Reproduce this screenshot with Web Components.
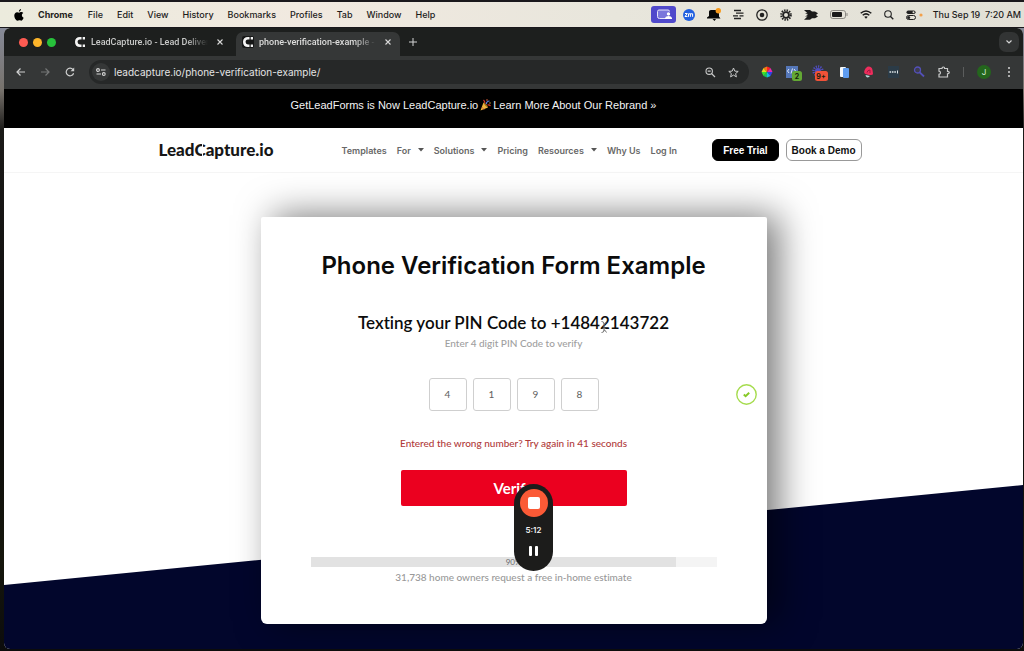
<!DOCTYPE html>
<html lang="en">
<head>
<meta charset="utf-8">
<meta name="viewport" content="width=device-width, initial-scale=1">
<title>phone-verification-example - LeadCapture.io</title>
<style>
  html { height: 100%; }
  body {
    margin: 0;
    min-height: 100%;
    display: flex;
    flex-direction: column;
    font-family: Inter, "Liberation Sans", sans-serif;
    background: linear-gradient(#1a181c 28px, #868a98 28px, #77726c 90px, #1b1a18 130px, #0c0b0b 400px, #15160c 560px, #0c0c0c);
  }
</style>
</head>
<body>
<mac-menubar></mac-menubar>
<browser-window>
  <browser-tabs slot="tabs">
    <browser-tab>LeadCapture.io - Lead Delivery</browser-tab>
    <browser-tab active>phone-verification-example - LeadCapture</browser-tab>
  </browser-tabs>
  <browser-toolbar slot="toolbar" url="leadcapture.io/phone-verification-example/"></browser-toolbar>
  <promo-bar></promo-bar>
  <site-header>
    <nav-item>Templates</nav-item>
    <nav-item menu>For</nav-item>
    <nav-item menu>Solutions</nav-item>
    <nav-item>Pricing</nav-item>
    <nav-item menu>Resources</nav-item>
    <nav-item>Why Us</nav-item>
    <nav-item>Log In</nav-item>
  </site-header>
  <page-stage>
    <verify-card>
      <span slot="title">Phone Verification Form Example</span>
      <span slot="heading">Texting your PIN Code to +14842143722</span>
      <span slot="hint">Enter 4 digit PIN Code to verify</span>
      <pin-code slot="pin" value="4198"></pin-code>
      <span slot="retry">Entered the wrong number? Try again in 41 seconds</span>
      <progress-meter slot="progress" value="90"></progress-meter>
      <span slot="caption">31,738 home owners request a free in-home estimate</span>
    </verify-card>
  </page-stage>
</browser-window>
<recorder-pill></recorder-pill>

<script>
const define = (name, html, setup) => {
  const template = document.createElement('template');
  template.innerHTML = html;
  customElements.define(name, class extends HTMLElement {
    constructor() {
      super();
      this.attachShadow({ mode: 'open' }).append(template.content.cloneNode(true));
    }
    connectedCallback() { if (setup) setup(this, this.shadowRoot); }
  });
};

define('mac-menubar', `
  <style>
    :host { display: flex; align-items: center; height: 25px; margin-top: 2px; margin-bottom: 1px; padding: 0 3px 0 14px;
      background: linear-gradient(90deg, #ecebdd, #f1e9e0 30%, #e8e6dc 60%, #e2e0d6); color: #1d1c1b; font-size: 9px; font-weight: 500; white-space: nowrap; }
    nav { display: flex; align-items: center; gap: 14px; }
    b { font-weight: 700; margin-right: 1px; }
    .status { margin-left: auto; display: flex; align-items: center; gap: 12px; }
    .cast { margin-right: -5px; }
    time { margin-left: -2px; white-space: pre; }
    svg { display: block; }
  </style>
  <nav aria-label="Menu bar">
    <svg width="10" height="12" viewBox="0 0 10 12"><path fill="#000" d="M7 0C7 1.5 6 2.6 4.9 2.6 4.8 1.3 5.8.2 7 0ZM9.3 4.1C8.3 4.7 7.8 5.5 7.9 6.5 8 7.6 8.6 8.3 9.6 8.7 9 10.300 8.200 11.700 7.100 11.700 6.400 11.700 6.100 11.300 5.300 11.300 4.500 11.300 4.100 11.700 3.500 11.700 1.900 11.700.3 8.900.3 6.600.3 4.500 1.600 3.200 3.100 3.200 4 3.200 4.600 3.700 5.200 3.700 5.700 3.700 6.400 3.100 7.400 3.100 8.200 3.200 8.800 3.500 9.300 4.100Z"/></svg>
    <b>Chrome</b><span>File</span><span>Edit</span><span>View</span><span>History</span><span>Bookmarks</span><span>Profiles</span><span>Tab</span><span>Window</span><span>Help</span>
  </nav>
  <div class="status">
    <svg class="cast" width="25" height="17" viewBox="0 0 25 17"><rect width="25" height="17" rx="3" fill="#5049cb"/><path d="M14 12.500H8.500Q6.500 12.500 6.500 10.500V5.500Q6.500 4 8 4H17Q18.500 4 18.500 5.500" fill="#7a76dc" stroke="#e6e5fa"/><circle cx="17.500" cy="8" r="1.700" fill="#fff"/><path d="M14 13V12Q14.500 10 17.500 10T21 12V13Z" fill="#fff"/></svg>
    <svg width="12" height="12" viewBox="0 0 12 12"><circle cx="6" cy="6" r="6" fill="#2160e0"/><path d="M2 4.500H4.300L2 7.500H4.500M5.500 7.800V4.800H7.400V7.800M7.400 4.800H9.600V7.800" fill="none" stroke="#fff"/></svg>
    <svg width="14" height="13" viewBox="0 0 14 13"><path d="M0 10.500V9.500L2 8V3.500Q2 2 4 2H10Q12 2 12 4V8.500L13.500 10.500ZM5.500 11H9L7.500 13Z" fill="#080808"/><circle cx="11.300" cy="2.700" r="2.700" fill="#f79a1c"/></svg>
    <svg width="11" height="11" viewBox="0 0 11 11"><path d="M1 1.500H8M1 9.500H8M3 4.200H10.500M0 6.800H5M6.500 6.800H10.500" stroke="#222" stroke-width="1.300"/></svg>
    <svg width="12" height="12" viewBox="0 0 12 12"><circle cx="6" cy="6" r="5.200" fill="none" stroke="#222" stroke-width="1.300"/><circle cx="6" cy="6" r="2.300" fill="#222"/></svg>
    <svg width="12" height="12" viewBox="0 0 12 12"><circle cx="6" cy="6" r="2.900" fill="none" stroke="#222" stroke-width="1.800"/><circle cx="6" cy="6" r="4.700" fill="none" stroke="#222" stroke-width="2.200" stroke-dasharray="1.400 1.060"/></svg>
    <svg width="14" height="10" viewBox="0 0 14 10"><path d="M0 0H6L8 1.500H11L14 3.200 12 4.900 14 6.600 11 8.200H8L6 9.700H0L3.500 6.500H1L4 4.800 1 3.200H3.500Z" fill="#1b1b1b"/></svg>
    <svg width="18" height="9" viewBox="0 0 18 9"><rect x=".5" y=".5" width="15" height="8" rx="2.300" fill="none" stroke="#8a8882"/><rect x="2" y="2" width="10" height="5" rx="1" fill="#1b1b1b"/><path d="M17 3V6" stroke="#8a8882"/></svg>
    <svg width="12" height="9" viewBox="0 0 12 9"><g fill="none" stroke="#1b1b1b" stroke-width="1.500"><path d="M.7 3.300Q6-1.400 11.300 3.300"/><path d="M2.700 5.300Q6 2.500 9.300 5.300"/></g><path d="M4.200 6.800Q6 5.500 7.800 6.800L6 8.800Z" fill="#1b1b1b"/></svg>
    <svg width="10" height="10" viewBox="0 0 10 10"><circle cx="4" cy="4" r="3.300" fill="none" stroke="#222" stroke-width="1.100"/><path d="M6.500 6.500 9.300 9.300" stroke="#222" stroke-width="1.300"/></svg>
    <svg width="17" height="10" viewBox="0 0 17 10"><rect x=".5" y=".5" width="9" height="3.500" rx="1.700" fill="#222"/><circle cx="7.500" cy="2.200" r="1" fill="#e3e1d7"/><rect x=".5" y="5.500" width="9" height="4" rx="2" fill="none" stroke="#222"/><circle cx="2.700" cy="7.500" r="1.500" fill="#222"/><circle cx="15" cy="5" r="1.600" fill="#f3a04a"/></svg>
    <time>Thu Sep 19  7:20 AM</time>
  </div>`);

define('browser-window', `
  <style>
    :host { display: flex; flex-direction: column; flex: 1; margin: 0 1px 2px 4px; border-radius: 6px; overflow: hidden; background: #fff; }
  </style>
  <slot name="tabs"></slot><slot name="toolbar"></slot><slot></slot>`);

define('browser-tabs', `
  <style>
    :host { display: flex; align-items: flex-end; height: 28px; padding: 0 4px 0 15px; background: #1d1f1e; }
    .lights { display: flex; gap: 5px; align-self: center; margin-right: 12px; }
    i { width: 9px; height: 9px; border-radius: 50%; background: #fe5b52; }
    i:nth-child(2) { background: #fdb52a; } i:nth-child(3) { background: #27c13b; }
    button { border: 0; padding: 0; background: none; display: grid; place-items: center; align-self: center; }
    .new { width: 16px; height: 16px; margin-left: 5px; }
    .list { width: 20px; height: 20px; margin-left: auto; border-radius: 7px; background: #323434; }
  </style>
  <div class="lights"><i></i><i></i><i></i></div>
  <slot></slot>
  <button class="new" aria-label="New tab"><svg width="8" height="8" viewBox="0 0 8 8"><path d="M4 0V8M0 4H8" stroke="#d3d4d4"/></svg></button>
  <button class="list" aria-label="Search tabs"><svg width="6" height="4" viewBox="0 0 6 4"><path d="M.5.5 3 3 5.500.5" fill="none" stroke="#d3d4d4" stroke-width="1.200"/></svg></button>`);

define('browser-tab', `
  <style>
    :host { display: flex; align-items: center; box-sizing: border-box; width: 164px; height: 24px; padding: 0 8px 4px 6px;
      border-radius: 7px 7px 0 0; color: #c9cac9; font: 500 9px/12px Roboto, sans-serif; }
    :host(:not([active])) { margin-right: 4px; }
    :host([active]) { background: #353737; color: #dededd; }
    svg { flex: none; display: block; }
    span { flex: 1; margin: 0 8px 0 5px; overflow: hidden; white-space: nowrap;
      mask-image: linear-gradient(90deg, #000 calc(100% - 22px), transparent); }
    button { border: 0; padding: 0; background: none; width: 8px; height: 8px; }
    :host([active]) .mark { background: #161717; border-radius: 2px; }
  </style>
  <svg class="mark" width="12" height="12" viewBox="0 0 12 12"><path d="M7.500 2.300H6Q2.300 2.300 2.300 6T6 9.700H7.500" fill="none" stroke="#f4f4f4" stroke-width="2.600"/><path d="M8.700 1H11V3.400H8.700ZM8.700 8.600H11V11H8.700Z" fill="#f4f4f4"/></svg>
  <span><slot></slot></span>
  <button aria-label="Close tab"><svg width="8" height="8" viewBox="0 0 8 8"><path d="M1.500 1.500 6.500 6.500M6.500 1.500 1.500 6.500" stroke="#d8d8d8" stroke-width="1.100"/></svg></button>`);

define('browser-toolbar', `
  <style>
    :host { display: flex; align-items: center; box-sizing: border-box; height: 33px; padding: 0 13px 1px 10px; background: #353737; }
    button { border: 0; padding: 0; background: none; display: grid; place-items: center; flex: none; }
    .nav { display: flex; gap: 13px; margin-right: 13px; }
    .nav button { width: 12px; height: 12px; }
    form { flex: 1; min-width: 0; display: flex; align-items: center; height: 24px; margin: 0; padding: 0 10px 0 3px; box-sizing: border-box; border-radius: 12px; background: #262828; gap: 4px; }
    .site { width: 18px; height: 18px; border-radius: 50%; background: #353737; }
    input { flex: 1; min-width: 0; border: 0; padding: 0; outline: 0; background: none; color: #e4e4e4; font: 400 10px/16px Inter, sans-serif; }
    .star { margin-left: 8px; }
    .ext { display: flex; align-items: center; gap: 13px; margin-left: 12px; }
    .ext svg { display: block; overflow: visible; }
    .me { width: 14px; height: 14px; border-radius: 50%; background: #24661d; color: #d5ead2; font: 8px/14px Inter, sans-serif; text-align: center; }
    .rule { width: 1px; height: 10px; background: #5b5d5d; }
    .badge { font: 700 7px Inter, sans-serif; fill: #14200d; text-anchor: middle; }
  </style>
  <div class="nav">
    <button aria-label="Back"><svg width="9" height="8" viewBox="0 0 9 8"><path d="M9 4H1M4.500.5 1 4 4.500 7.500" fill="none" stroke="#cfd0d0" stroke-width="1.200"/></svg></button>
    <button aria-label="Forward"><svg width="9" height="8" viewBox="0 0 9 8"><path d="M0 4H8M4.500.5 8 4 4.500 7.500" fill="none" stroke="#757777" stroke-width="1.200"/></svg></button>
    <button aria-label="Reload"><svg width="10" height="10" viewBox="0 0 10 10"><path d="M8.600 6.200A3.800 3.800 0 1 1 8 2.700" fill="none" stroke="#cfd0d0" stroke-width="1.200"/><path d="M9.200.5V4.200H5.500Z" fill="#cfd0d0"/></svg></button>
  </div>
  <form>
    <button type="button" class="site" aria-label="Site information"><svg width="10" height="8" viewBox="0 0 10 8"><g fill="none" stroke="#d6d6d6" stroke-width="1.100"><circle cx="2" cy="2" r="1.400"/><path d="M5 2H9.500M.5 6H5"/><circle cx="7.800" cy="6" r="1.400"/></g></svg></button>
    <input aria-label="Address" spellcheck="false">
    <svg width="11" height="11" viewBox="0 0 11 11"><circle cx="4.200" cy="4.200" r="3.200" fill="none" stroke="#c9caca" stroke-width="1.100"/><path d="M6.500 6.500 10 10M2.700 4.200H5.700" stroke="#c9caca" stroke-width="1.200"/></svg>
    <svg class="star" width="11" height="11" viewBox="0 0 11 11"><path d="M5.500 1 6.800 4.100 10.200 4.400 7.600 6.600 8.400 9.900 5.500 8.100 2.600 9.900 3.400 6.600.8 4.400 4.200 4.100Z" fill="none" stroke="#c9caca"/></svg>
  </form>
  <div class="ext">
    <svg width="12" height="12" viewBox="0 0 12 12"><path d="M6 6V.5L9.500 2Z" fill="#f22"/><path d="M6 6 9.500 2 11.500 6Z" fill="#e828b0"/><path d="M6 6H11.500L9.500 10Z" fill="#3040e8"/><path d="M6 6 9.500 10 6 11.500Z" fill="#15b8e8"/><path d="M6 6V11.500L2.500 10Z" fill="#18c060"/><path d="M6 6 2.500 10 .5 6Z" fill="#38e030"/><path d="M6 6H.5L2.500 2Z" fill="#e8d820"/><path d="M6 6 2.500 2 6 .5Z" fill="#f47a18"/></svg>
    <svg width="14" height="12" viewBox="0 0 14 12"><rect width="12" height="12" fill="#5577b8"/><path d="M3 3 1.500 5 3 7M6.500 2.500 5 7.500M8 3 9.500 5 8 7" fill="none" stroke="#dfe8f8"/><rect x="6" y="5" width="10" height="10" rx="2.500" fill="#63a834"/><text class="badge" x="11" y="13">2</text></svg>
    <svg width="13" height="12" viewBox="0 0 13 12"><circle cx="5" cy="5" r="3" fill="#4f4dc0"/><circle cx="5" cy="5" r="4.500" fill="none" stroke="#4f4dc0" stroke-width="2.400" stroke-dasharray="1.200 1.100"/><rect x="2" y="5" width="13" height="10" rx="2.500" fill="#f05238"/><text class="badge" x="8" y="13">9+</text></svg>
    <svg width="11" height="11" viewBox="0 0 11 11"><rect x="1" width="6" height="10" rx="1" fill="#f3f7fb"/><rect x="4" y="1" width="6" height="10" rx="1" fill="#5e9cf0"/></svg>
    <svg width="11" height="12" viewBox="0 0 11 12"><path d="M5.500.5Q9 .5 9.500 4L10 7.500Q10 9 8 9H6L2.500 8Q.5 7 1.500 4.500 3 .8 5.500.5Z" fill="#ee2d5c"/><path d="M4 6.500Q4.500 4 7 4V7" fill="none" stroke="#a01840"/><path d="M2.500 9 7 10Q5 12.500 3 10.500Z" fill="#b7d8dc"/></svg>
    <svg width="13" height="12" viewBox="0 0 13 12"><rect x="1" width="11" height="12" fill="#2b3b47"/><path d="M2.500 6H9" stroke="#dbe3e6" stroke-width="1.600" stroke-dasharray="1.600 .8"/><path d="M10.500 4.500V7.500" stroke="#dbe3e6"/></svg>
    <svg width="12" height="12" viewBox="0 0 12 12"><circle cx="4.500" cy="4" r="3" fill="#3e3d50" stroke="#5350b8" stroke-width="1.300"/><path d="M6.700 6.300 11 10.500" stroke="#5350b8" stroke-width="1.800"/></svg>
    <svg width="12" height="12" viewBox="0 0 12 12"><path d="M1 2.500H4Q4 1 5.300 1T6.600 2.500H9.500V5.300Q11.300 5.300 11.300 6.500T9.500 7.800V11H1V8.300Q2.500 8 2.500 6.700T1 5.200Z" fill="none" stroke="#c9caca" stroke-width="1.200"/></svg>
    <div class="rule"></div>
    <div class="me">J</div>
    <svg width="6" height="10" viewBox="0 0 6 10"><g fill="#d4d4d4"><circle cx="5" cy="1" r="1"/><circle cx="5" cy="5" r="1"/><circle cx="5" cy="9" r="1"/></g></svg>
  </div>`, (el, root) => { root.querySelector('input').value = el.getAttribute('url'); });

define('promo-bar', `
  <style>
    :host { display: block; padding: 8px 96px 15px 16px; background: #000; text-align: center; font: 11px/16px "Liberation Sans", Arial, sans-serif; }
    a { display: inline-flex; align-items: center; gap: 2px; color: #f4f4f4; text-decoration: none; }
  </style>
  <a href="#rebrand"><span>GetLeadForms is Now LeadCapture.io</span>
  <svg role="img" aria-label="Party popper" width="11" height="12" viewBox="0 0 11 12"><path d="M.5 11.500 3.500 3.500Q6 5.500 8 8.500Z" fill="#f0b63c"/><path d="M3.500 3.500Q7 4.500 8 8.500 5 7.500 3.500 3.500Z" fill="#9c6a20"/><path d="M2 8 4 10.500" stroke="#d8704a"/><path d="M5 4Q4.500 2 3.500 1M7.500 6Q9.500 5.500 10.500 7" fill="none" stroke="#d4382c" stroke-width="1.200"/><path d="M6.300 5Q6.500 2 9.500 2" fill="none" stroke="#5d7fe0" stroke-width="1.200"/><circle cx="7" cy="1" r=".8" fill="#e2643c"/><circle cx="10" cy="4" r=".7" fill="#e6b83c"/></svg>
  <span>Learn More About Our Rebrand »</span></a>`);

define('nav-item', `
  <style>
    :host { display: flex; }
    a { display: flex; align-items: center; gap: 7px; color: #686868; text-decoration: none; }
    svg { display: none; }
    :host([menu]) svg { display: block; }
  </style>
  <a href="#"><slot></slot><svg width="6" height="4" viewBox="0 0 6 4"><path d="M0 0H6L3 3.500Z" fill="#555"/></svg></a>`);

define('site-header', `
  <style>
    :host { display: block; border-bottom: 1px solid #f5f5f5; background: #fff; }
    .inner { display: flex; align-items: center; height: 44px; max-width: 710px; margin: 0 auto; box-sizing: border-box; padding-right: 7px; }
    .logo { width: 183px; flex: none; color: #161616; font: 900 17px/20px Lato, sans-serif; text-decoration: none; }
    .notch { position: relative; }
    .notch::after { content: ""; position: absolute; right: 3px; top: 4px; width: 1px; height: 14px; background: #fff; }
    nav { display: flex; gap: 10px; font-size: 9px; font-weight: 600; white-space: nowrap; }
    .cta { display: flex; gap: 7px; margin-left: auto; }
    button { box-sizing: border-box; height: 22px; border: 1px solid #999; border-radius: 6px; padding: 1px 5px 0; background: #fff; color: #111; font: 700 10px/16px "Liberation Sans", Arial, sans-serif; white-space: nowrap; }
    .dark { border-color: #000; background: #000; color: #fff; padding: 1px 10px 0; }
  </style>
  <div class="inner">
    <a class="logo" href="#">Lead<span class="notch">C</span>apture.io</a>
    <nav aria-label="Site"><slot></slot></nav>
    <div class="cta"><button class="dark">Free Trial</button><button>Book a Demo</button></div>
  </div>`);

define('page-stage', `
  <style>
    :host { position: relative; z-index: 0; display: flex; justify-content: center; align-items: flex-start; flex: 1; padding: 44px 16px 25px; }
    :host::before { content: ""; position: absolute; inset: 0; z-index: -1; background: #02062c;
      clip-path: polygon(0 calc(100% - 64px), 100% calc(100% - 164px), 100% 100%, 0 100%); }
  </style>
  <slot></slot>`);

define('verify-card', `
  <style>
    :host { display: block; box-sizing: border-box; width: 100%; max-width: 506px; padding: 33px 10px 39px; border-radius: 2px 2px 6px 6px; background: #fff;
      box-shadow: 12px -2px 36px rgba(0,0,0,.53); text-align: center; font-family: Lato, sans-serif; font-variant-ligatures: none; }
    h1, h2, p, form { margin: 0; }
    h1 { font: 600 24px/32px Inter, sans-serif; color: #0b0b0b; }
    h2 { position: relative; margin-top: 29px; font-size: 17px; line-height: 24px; font-weight: 600; color: #0c0c0c; }
    p { font-size: 10px; line-height: 16px; font-weight: 500; }
    .hint { color: #a0a0a0; }
    .row { display: grid; grid-template-columns: 1fr auto 1fr; align-items: center; margin-top: 27px; }
    .ok { grid-column: 3; justify-self: end; }
    ::slotted(pin-code) { grid-column: 2; }
    .retry { margin-top: 24px; color: #b03a3a; }
    .verify { display: block; width: 226px; height: 36px; margin: 19px auto 51px; border: 0; border-radius: 2px; background: #eb001f; color: #fff; font: 700 15px/20px Lato, sans-serif; }
    .caption { margin-top: 2px; color: #999; }
    .beam { position: absolute; left: calc(50% + 87px); top: 10px; }
  </style>
  <h1><slot name="title"></slot></h1>
  <form>
    <h2><slot name="heading"></slot><svg class="beam" width="6" height="12" viewBox="0 0 6 12"><path d="M.5.5Q3 .5 3 2.500T5.500.5M3 2V10M.5 11.500Q3 11.500 3 9.500T5.500 11.500M1.500 7.500H4.500" fill="none" stroke="#777"/></svg></h2>
    <p class="hint"><slot name="hint"></slot></p>
    <div class="row">
      <slot name="pin"></slot>
      <svg class="ok" role="img" aria-label="Valid" width="21" height="21" viewBox="0 0 21 21"><circle cx="10.500" cy="10.500" r="9.700" fill="none" stroke="#a6dc4e" stroke-width="1.400"/><path d="M7.800 10.600 9.600 12.200 13.200 8.800" fill="none" stroke="#86c926" stroke-width="2"/></svg>
    </div>
    <p class="retry"><slot name="retry"></slot></p>
    <button type="button" class="verify">Verify</button>
    <slot name="progress"></slot>
    <p class="caption"><slot name="caption"></slot></p>
  </form>`);

define('pin-code', `
  <style>
    :host { display: flex; gap: 6px; }
    input { box-sizing: border-box; width: 38px; height: 33px; margin: 0; padding: 0 0 2px; border: 1px solid #cfcfcf; border-radius: 3px; background: #fff; color: #5e5e5e; text-align: center; font: 10px/16px Lato, sans-serif; }
  </style>`, (el, root) => {
    [...el.getAttribute('value')].forEach((digit, i) => {
      const box = document.createElement('input');
      box.value = digit;
      box.maxLength = 1;
      box.inputMode = 'numeric';
      box.setAttribute('aria-label', 'PIN digit ' + (i + 1));
      root.append(box);
    });
  });

define('progress-meter', `
  <style>
    :host { display: grid; height: 10px; margin: 0 40px; background: #f4f4f4; }
    .fill, span { grid-area: 1 / 1; }
    .fill { background: #e2e2e2; }
    span { font: 8px/10px Lato, sans-serif; color: #6a6a6a; text-align: center; }
  </style>
  <div class="fill"></div><span></span>`, (el, root) => {
    const value = el.getAttribute('value') + '%';
    el.setAttribute('role', 'progressbar');
    root.querySelector('.fill').style.width = value;
    root.querySelector('span').textContent = value;
  });

define('recorder-pill', `
  <style>
    :host { position: fixed; left: calc(50% + 2px); bottom: 80px; display: flex; flex-direction: column; align-items: center; box-sizing: border-box; width: 39px; height: 87px; padding-top: 5px; border-radius: 20px; background: #1c1c1b; color: #f2f2f2; font: 600 8px/12px Inter, sans-serif; }
    button { border: 0; padding: 0; display: grid; place-items: center; background: none; }
    .stop { width: 28px; height: 28px; border-radius: 50%; background: #fb5a36; }
    time { margin: 7px 0 10px; }
  </style>
  <button class="stop" aria-label="Stop recording"><svg width="12" height="12"><rect width="12" height="12" rx="2" fill="#fff"/></svg></button>
  <time>5:12</time>
  <button aria-label="Pause recording"><svg width="9" height="10" viewBox="0 0 9 10"><rect width="3" height="10" rx="1" fill="#fff"/><rect x="6" width="3" height="10" rx="1" fill="#fff"/></svg></button>`);
</script>
</body>
</html>
